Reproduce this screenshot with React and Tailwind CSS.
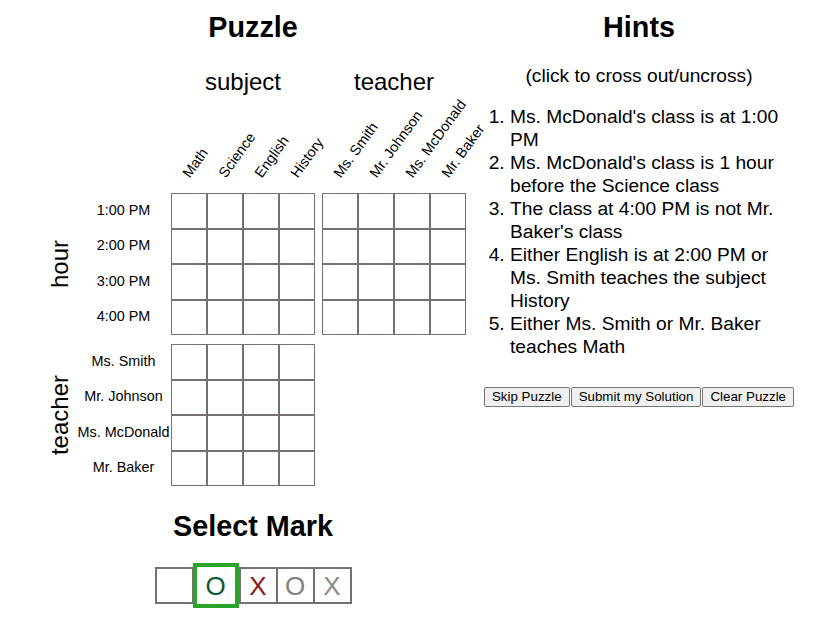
const subjects = ["Math", "Science", "English", "History"];
const teachers = ["Ms. Smith", "Mr. Johnson", "Ms. McDonald", "Mr. Baker"];
const hours = ["1:00 PM", "2:00 PM", "3:00 PM", "4:00 PM"];
const hints = [
  "Ms. McDonald's class is at 1:00 PM",
  "Ms. McDonald's class is 1 hour before the Science class",
  "The class at 4:00 PM is not Mr. Baker's class",
  "Either English is at 2:00 PM or Ms. Smith teaches the subject History",
  "Either Ms. Smith or Mr. Baker teaches Math",
];

function Grid() {
  return (
    <div className="grid grid-cols-4">
      {Array.from({ length: 16 }).map((_, i) => (
        <div key={i} className="h-[35.5px] w-[36px] border border-[#787070]" />
      ))}
    </div>
  );
}

function ColumnHeads({ title, items }) {
  return (
    <div className="flex w-[144px] flex-col">
      <div className="text-center text-[24px] leading-[28px]">{title}</div>
      <div className="flex h-[97px]">
        {items.map((item) => (
          <div key={item} className="flex w-[36px] min-w-0 items-end">
            <div className="mb-[12px] ml-[22px] w-0 origin-bottom-left rotate-[-54deg] whitespace-nowrap text-[14.4px] leading-[17px]">
              {item}
            </div>
          </div>
        ))}
      </div>
    </div>
  );
}

function Section({ label, rows, grids }) {
  return (
    <div className="flex">
      <div className="flex w-[36px] items-center justify-center pl-[4px]">
        <span className="rotate-180 text-[24px] leading-[28px] [writing-mode:vertical-rl]">{label}</span>
      </div>
      <div className="flex w-[95px] flex-col">
        {rows.map((row) => (
          <div key={row} className="flex h-[35.5px] items-center justify-center whitespace-nowrap text-[14.4px]">
            {row}
          </div>
        ))}
      </div>
      <Grid />
      {grids > 1 && (
        <>
          <div className="w-[7px]" />
          <Grid />
        </>
      )}
    </div>
  );
}

function MarkBox({ children, className }) {
  return (
    <div className={`flex items-center justify-center text-[26px] leading-none ${className}`}>
      {children}
    </div>
  );
}

export default function App() {
  return (
    <div className="flex min-h-[619px] w-[815px] bg-white font-['Liberation_Sans',Arial,sans-serif] text-black">
      <div className="ml-[40px] flex w-[426px] flex-col">
        <h2 className="mt-[10px] text-center text-[28.8px] font-bold leading-[34px]">Puzzle</h2>
        <div className="mt-[24px] flex">
          <div className="w-[131px]" />
          <ColumnHeads title="subject" items={subjects} />
          <div className="w-[7px]" />
          <ColumnHeads title="teacher" items={teachers} />
        </div>
        <Section label="hour" rows={hours} grids={2} />
        <div className="mt-[9px]">
          <Section label="teacher" rows={teachers} grids={1} />
        </div>
        <h2 className="mt-[23px] text-center text-[28.8px] font-bold leading-[34px]">Select Mark</h2>
        <div className="mt-[20px] flex items-center justify-center">
          <MarkBox className="h-[37px] w-[39px] border-2 border-[#787070]" />
          <MarkBox className="-ml-[1px] h-[45px] w-[46px] border-4 border-[#2aa52a] text-[#0f5a32]">O</MarkBox>
          <MarkBox className="h-[37px] w-[39px] border-2 border-[#787070] text-[#8b1a1a]">X</MarkBox>
          <MarkBox className="-ml-[2px] h-[37px] w-[39px] border-2 border-[#787070] text-[#808080]">O</MarkBox>
          <MarkBox className="-ml-[2px] h-[37px] w-[39px] border-2 border-[#787070] text-[#8a8a8a]">X</MarkBox>
        </div>
      </div>

      <div className="ml-[4px] flex w-[338px] flex-col">
        <h2 className="mt-[10px] text-center text-[28.8px] font-bold leading-[34px]">Hints</h2>
        <p className="mt-[19.5px] text-center text-[19.2px] leading-[23px]">(click to cross out/uncross)</p>
        <ol className="mt-[18.6px] list-decimal pl-[40px] pr-[13px] text-[19.2px] leading-[23px]">
          {hints.map((hint) => (
            <li key={hint} className="cursor-pointer">
              {hint}
            </li>
          ))}
        </ol>
        <div className="mt-[29px] flex justify-center gap-[1px]">
          {["Skip Puzzle", "Submit my Solution", "Clear Puzzle"].map((label) => (
            <button
              key={label}
              className="h-[20px] rounded-[2px] border border-[#767676] bg-[#efefef] px-[7px] text-[13.33px] leading-[16px]"
            >
              {label}
            </button>
          ))}
        </div>
      </div>
    </div>
  );
}
